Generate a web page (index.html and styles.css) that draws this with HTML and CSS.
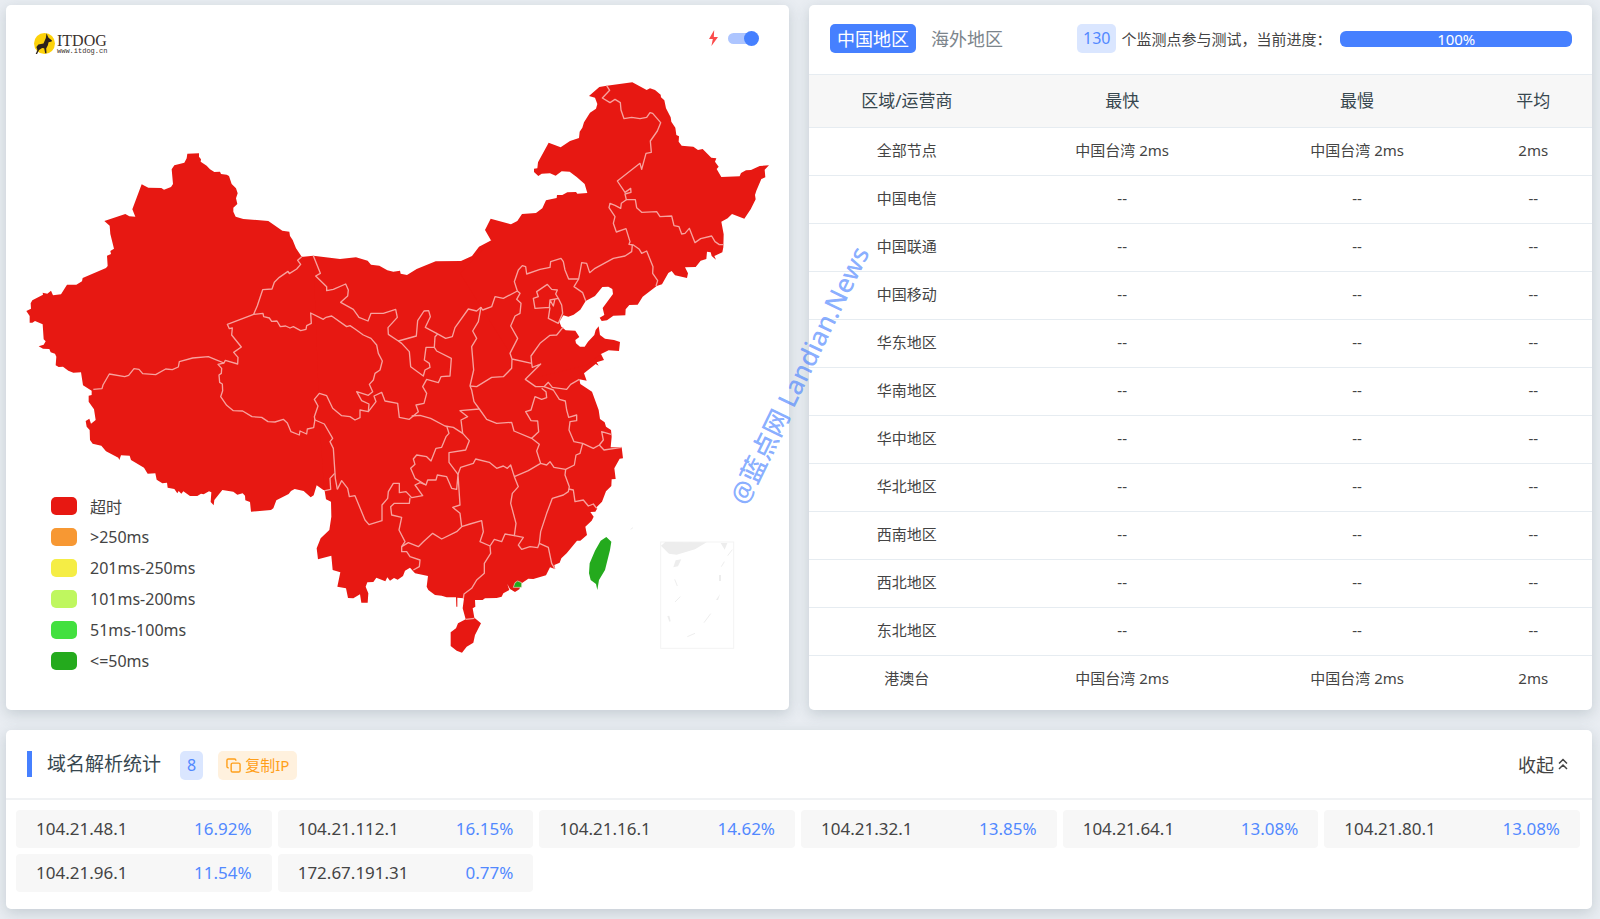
FILE: index.html
```html
<!DOCTYPE html>
<html lang="zh-CN">
<head>
    <meta charset="UTF-8">
    <meta name="viewport" content="width=device-width, initial-scale=1.0">
    <title>ITDOG</title>
    <link rel="stylesheet" href="styles.css">
</head>
<body>
    <div class="top-row">
        <section class="card map-card">
            <div class="map-header">
                <div class="logo">
                    <svg class="logo-icon" viewBox="0 0 62 62">
                        <circle cx="31" cy="31" r="31" fill="#fdd20a"/>
                        <path d="M37 1L35 15 28 31 13 34 7 41 10 50 5 62 9 62 15 50 24 44 30 45 33 60 37 60 36 46 41 36 43 27 52 25 53 22 43 14 41 10Z" fill="#2b211c"/>
                    </svg>
                    <div class="logo-text">
                        <span class="logo-name">ITDOG</span>
                        <span class="logo-url">www.itdog.cn</span>
                    </div>
                </div>
                <label class="speed-switch">
                    <svg class="bolt" viewBox="0 0 26 46"><path d="M15 0L0 26H11L7 46 26 20H14Z" fill="#fb4b4b"/></svg>
                    <input type="checkbox" class="switch" checked>
                </label>
            </div>

            <svg class="map" viewBox="18 225 2349 1890">
                <!-- west -->
                <g transform="translate(0 390)">
                    <path class="land" d="M905 380L888 355 878 330 870 318 868 305 847 302 805 273 730 267 707 260 700 245 700 233 712 222 708 205 713 190 708 175 695 162 687 138 680 134 663 132 660 125 643 126 630 118 620 107 602 95 603 88 597 80 597 70 562 71 560 85 553 98 523 106 515 118 519 162 513 171 492 179 484 174 445 173 425 163 397 238 406 260 388 259 376 252 313 273 329 287 331 312 342 356 331 363 333 372 321 377 323 408 318 414 248 444 246 454 229 464 201 464 183 493 159 496 153 482 142 491 128 488 129 494 97 511 92 520 93 536 79 543 89 558 89 578 97 578 105 573 128 583 131 628 137 634 131 644 116 649 129 656 148 657 152 667 165 671 169 680 167 706 176 711 189 710 205 722 220 728 243 727 249 766 275 782 275 795 266 797 266 815 282 838 287 870 273 881 268 866 257 873 260 890 269 900 270 930 278 941 304 947 318 964 355 983 358 990 363 976 389 977 393 990 432 1013 443 1031 466 1030 470 1049 487 1060 501 1058 503 1073 523 1077 532 1090 536 1083 544 1091 550 1084 570 1098 592 1098 603 1091 611 1093 627 1084 634 1087 632 1116 641 1126 643 1110 667 1080 700 1085 712 1094 728 1090 735 1097 736 1111 750 1116 753 1145 813 1140 820 1135 829 1111 866 1092 873 1083 884 1077 911 1083 932 1102 941 1096 950 1066 970 1080 1000 1080 1000 500 940 377 910 380Z"/>
                </g>
                <!-- centre and south -->
                <g transform="translate(900 690)">
                    <path class="land" d="M40 77L120 87 168 82 203 92 213 104 238 107 262 121 280 125 300 122 302 131 321 135 350 117 407 94 483 93 516 78 537 50 574 31 700 300 750 400 903 372 912 390 890 397 896 407 887 402 852 430 860 452 838 448 841 462 876 485 896 540 900 567 914 577 918 590 933 600 935 620 932 652 965 652 969 685 959 686 943 715 947 747 935 748 934 768 918 784 906 815 888 833 892 835 886 845 871 846 881 860 875 872 856 890 861 915 841 932 831 932 800 970 784 985 779 998 763 1005 765 1017 750 1012 738 1036 700 1047 685 1046 665 1060 658 1078 645 1086 630 1077 622 1062 628 1080 610 1090 605 1100 590 1104 555 1105 548 1110 525 1110 526 1130 518 1135 523 1163 543 1180 525 1215 520 1238 500 1250 486 1268 470 1262 452 1248 452 1207 468 1195 474 1180 497 1168 488 1135 492 1105 472 1103 472 1130 469 1130 468 1102 440 1102 425 1097 405 1095 385 1080 380 1070 384 1038 345 1030 330 1013 315 1022 309 1038 293 1049 282 1044 270 1052 262 1042 256 1054 229 1043 220 1056 202 1057 197 1070 205 1090 203 1118 184 1118 180 1093 160 1105 144 1104 138 1075 112 1070 121 1027 98 1020 94 977 54 988 50 955 62 925 88 900 94 860 93 815 78 808 72 770 60 600Z"/>
                </g>
                <!-- north east -->
                <g transform="translate(1380 180)">
                    <path class="land" d="M94 543L75 510 92 476 153 493 172 483 186 462 228 459 247 445 258 421 290 414 291 405 307 405 322 397 348 396 352 401 382 399 374 372 350 351 329 335 305 334 287 347 270 340 245 341 235 348 222 336 222 326 232 325 234 307 266 248 302 262 330 243 357 234 359 215 367 203 372 187 390 158 408 146 412 132 405 113 387 108 418 81 440 77 517 67 560 90 570 85 585 90 602 104 603 112 613 121 618 145 632 172 634 185 646 203 649 225 657 229 656 245 665 257 700 260 714 270 728 267 754 293 769 295 765 305 776 320 770 327 784 351 839 349 843 339 858 331 873 330 899 318 927 316 914 329 916 352 904 357 889 392 885 405 887 418 872 448 853 476 816 462 803 475 784 485 791 523 790 562 787 577 763 588 768 599 755 588 752 577 741 575 739 597 722 602 707 621 675 622 684 640 681 654 645 646 635 633 625 639 606 673 590 678 548 710 533 734 508 735 497 748 496 766 460 767 441 781 425 783 419 773 433 765 428 744 459 702 457 687 445 680 427 681 405 708 377 723 361 749 341 764 325 770 310 766 298 785 304 800 317 811 346 812 358 831 346 840 348 850 360 860 374 860 384 845 403 825 407 810 416 799 420 825 435 836 462 840 480 846 477 873 446 871 423 882 380 915 200 960 0 640Z"/>
                </g>

                <!-- province borders -->
                <g transform="translate(0 390)">
                    <path class="border" d="M905 380L893 391 902 403 890 417 868 431 864 424 838 442 823 457 816 477 788 479 772 527 761 553 789 550 791 560 808 564 815 574 831 573 841 590 857 588 870 594 880 590 902 602 918 598 920 587 934 580 932 549 970 568 978 562"/>
                    <path class="border" d="M761 553L682 583 688 596 697 594 695 615 724 651 701 667 714 682 713 702 676 691 672 699 645 688 625 680 578 684 538 695 535 711 517 719 497 717 467 734 428 731 417 718 402 716 386 736 374 740 328 732 309 765 306 776 280 778"/>
                    <path class="border" d="M672 699L654 703 665 715 664 730 657 735 659 757 667 762 668 782 662 800 680 826 700 842 728 843 756 860 785 862 804 875 825 876 850 868 862 879 873 905 898 915 900 903 920 912 922 897 941 893 945 868"/>
                </g>
                <g transform="translate(900 690)">
                    <path class="border" d="M78 262L95 258 140 290 150 287 165 297 190 315 213 325 230 345 235 370 247 393 240 420 225 430 220 450 208 463 218 485 205 496 170 485 185 512 207 522 205 545 180 540 180 563 165 570 150 560 125 557 98 535 80 497 58 490 43 508 54 528 43 560 45 570 73 582 98 625 90 635 100 655 106 745 112 778"/>
                    <path class="border" d="M40 77L61 130 47 138 80 170 80 182 100 178 137 162 145 180 143 198 122 217 160 238 177 262 204 273 213 250 250 250 287 238 292 262 264 293 265 313 295 333 349 318 353 272 372 243 386 242 391 260 376 292 410 310 437 325 457 320 465 293 505 237 530 243 543 232 548 240 575 230 585 200 610 205 652 183 643 155 655 120 667 107 677 110 680 132 720 118 750 112 752 95 783 85 790 95 795 120 806 147 836 147 845 98 860 100 869 128 885 115 940 85 975 78 995 65 997 45"/>
                    <path class="border" d="M295 333L305 340 328 365 332 410 370 438 375 420 390 412 388 400 373 390 378 352 403 352 405 320 413 312M403 352L410 363 454 385 450 438 423 440 415 458 380 448 368 470 380 490 372 520 348 525 355 545 328 568 298 562 293 520 255 513 245 487 222 498 228 515 205 545"/>
                    <path class="border" d="M335 558L360 556 392 565 435 588 460 592 488 610 483 570 503 560 480 542 538 537 522 515 515 480 510 468 521 420 515 350 530 325 518 303 535 275 543 232"/>
                    <path class="border" d="M510 468L530 470 575 442 610 440 635 415 636 387 630 370 653 325 632 288 645 258 660 250 663 220 650 208 660 190 652 183M636 387L695 400 693 378 720 340 750 316 770 315 789 292M695 400L697 412 722 402 676 448 707 470 732 470 745 457 757 472 800 478 812 463 838 448"/>
                    <path class="border" d="M538 537L560 568 590 580 635 577 642 603 695 625 716 605 713 573 693 572 677 545 693 540 705 500 725 508 740 503 738 485 725 475M732 470L760 480 778 508 796 513 800 540 806 562 830 555 830 572 810 575 807 600 822 635 848 640 880 655 898 645 910 630 905 605 933 613M898 645L912 660 965 652"/>
                    <path class="border" d="M695 625L718 643 710 663 722 700 740 705 750 695 762 712 797 718 823 705 828 675 840 670 848 640M488 610L508 632 497 660 447 668 447 697 474 733 482 712 520 700 527 687 568 697 590 715 610 708 622 715 632 705 643 740 685 722 722 700"/>
                    <path class="border" d="M440 588L447 610 438 620 425 652 408 655 393 693 380 680 350 675 340 687 345 703 332 715 345 745 378 765 383 750 408 750 412 735 440 740 455 775 470 778 474 733 480 825 458 832 480 850 485 890"/>
                    <path class="border" d="M378 765L360 758 345 765 368 797 335 803 318 785 298 788 298 760 280 760 265 785 263 805 246 825 246 872 207 884 195 870 165 797 148 800 143 775 125 752 112 778M330 803L328 820 283 820 272 830 275 855 305 862 297 900 315 935 305 950 305 965 320 965 330 980 360 990 358 1010 340 1020M104 730L90 745 92 778 75 782"/>
                    <path class="border" d="M305 950L325 938 355 950 370 935 398 910 425 927 470 905 485 890 510 882 545 872 550 905 540 935 570 948 572 970 553 1000 553 1030 530 1050 515 1075 492 1092 490 1105M570 948L583 928 605 935 615 912 643 917 648 880 632 820 637 790 655 770 643 740"/>
                    <path class="border" d="M643 917L670 922 655 945 665 958 690 950 713 953 718 940 722 905 740 850 757 805 790 795 805 785 808 770 795 735 797 718M806 777L820 780 825 815 850 810 865 828 880 822 890 835M718 940L745 952 755 1000 765 1017M497 1168L523 1165"/>
                    <path class="border" d="M700 205L715 200 710 185 742 163 755 178 772 180 767 192 775 205 750 210 748 232 705 235ZM775 205L785 225 788 250 775 280 745 265 750 232M750 210L760 228 765 206M836 147L822 170 848 188 857 212"/>
                    <path class="hit" d="M919 921L934 935 930 960 915 1020 897 1050 892 1080 888 1062 872 1050 867 1030 869 1000 885 962 902 932Z"/>
                    <path class="hit hit-line" d="M640 1072L645 1058 653 1053 665 1058 665 1072Z"/>
                </g>
                <g transform="translate(1380 180)">
                    <path class="border" d="M440 77L449 91 427 114 450 128 465 118 481 128 483 150 492 176 515 172 540 176 560 172 570 158 578 160 602 188 592 213 571 243 574 277 558 280 545 328 540 310 472 363 495 397 512 385 513 397 495 402 499 419 526 419 530 443 545 457 590 455 600 470 635 468 642 497 657 500 665 522 675 520 688 505 705 548 722 536 755 528 765 545 778 554 792 554"/>
                    <path class="border" d="M499 419L484 430 482 445 465 436 450 430 447 443 465 470 460 490 469 516 498 506 510 545 507 553 520 555 538 568 545 580 560 573 579 620 578 640 593 662 588 678"/>
                </g>

                <!-- south sea inset -->
                <g class="inset" transform="translate(1680 1500)">
                    <rect x="302" y="126" width="219" height="319" fill="none" stroke="#f4f4f4" stroke-width="3"/>
                    <path d="M316 126L440 127 405 148 350 164 327 161 303 137ZM482 129H502L494 149ZM347 181L364 178 354 199 340 202Z" fill="#ededed"/>
                    <path d="M477 225H483V243H477ZM480 282L474 300H468ZM322 348L328 347 332 364 328 365Z" fill="#ededed"/>
                    <path d="M517 149L503 167M493 185L484 200M344 238L352 258M361 290L345 306M452 341L432 368M405 400L382 410M212 88L219 83" stroke="#eee" stroke-width="3"/>
                </g>
            </svg>

            <ul class="legend">
                <li><span class="swatch timeout"></span>超时</li>
                <li><span class="swatch over-250"></span>&gt;250ms</li>
                <li><span class="swatch to-250"></span>201ms-250ms</li>
                <li><span class="swatch to-200"></span>101ms-200ms</li>
                <li><span class="swatch to-100"></span>51ms-100ms</li>
                <li><span class="swatch to-50"></span>&lt;=50ms</li>
            </ul>
        </section>

        <section class="card">
            <div class="result-header">
                <button class="tab active">中国地区</button>
                <button class="tab">海外地区</button>
                <div class="progress-info">
                    <span class="badge">130</span>
                    <span class="progress-label">个监测点参与测试，当前进度：</span>
                    <div class="progress"><div class="progress-bar" style="width: 100%">100%</div></div>
                </div>
            </div>
            <table class="result-table">
                <thead>
                    <tr><th>区域/运营商</th><th>最快</th><th>最慢</th><th>平均</th></tr>
                </thead>
                <tbody>
                    <tr><td>全部节点</td><td>中国台湾 2ms</td><td>中国台湾 2ms</td><td>2ms</td></tr>
                    <tr><td>中国电信</td><td>--</td><td>--</td><td>--</td></tr>
                    <tr><td>中国联通</td><td>--</td><td>--</td><td>--</td></tr>
                    <tr><td>中国移动</td><td>--</td><td>--</td><td>--</td></tr>
                    <tr><td>华东地区</td><td>--</td><td>--</td><td>--</td></tr>
                    <tr><td>华南地区</td><td>--</td><td>--</td><td>--</td></tr>
                    <tr><td>华中地区</td><td>--</td><td>--</td><td>--</td></tr>
                    <tr><td>华北地区</td><td>--</td><td>--</td><td>--</td></tr>
                    <tr><td>西南地区</td><td>--</td><td>--</td><td>--</td></tr>
                    <tr><td>西北地区</td><td>--</td><td>--</td><td>--</td></tr>
                    <tr><td>东北地区</td><td>--</td><td>--</td><td>--</td></tr>
                    <tr><td>港澳台</td><td>中国台湾 2ms</td><td>中国台湾 2ms</td><td>2ms</td></tr>
                </tbody>
            </table>
        </section>

        <div class="watermark">@蓝点网 Landian.News</div>
    </div>

    <section class="card">
        <div class="dns-header">
            <h2>域名解析统计</h2>
            <span class="badge">8</span>
            <button class="copy-btn">
                <svg viewBox="0 0 16 16" fill="none" stroke="currentColor" stroke-width="1.5">
                    <rect x="5.5" y="5.5" width="9.5" height="9.5" rx="1.5"/>
                    <path d="M3 10.5H2.5A1.5 1.5 0 0 1 1 9V2.5A1.5 1.5 0 0 1 2.5 1H9A1.5 1.5 0 0 1 10.5 2.5V3"/>
                </svg>
                复制IP
            </button>
            <button class="collapse-btn">
                收起
                <svg viewBox="0 0 10 12" fill="none" stroke="currentColor" stroke-width="1.5"><path d="M1 5.5L5 1.5 9 5.5M1 11L5 7 9 11"/></svg>
            </button>
        </div>
        <div class="ip-list">
            <div class="ip-item"><span>104.21.48.1</span><span class="percent">16.92%</span></div>
            <div class="ip-item"><span>104.21.112.1</span><span class="percent">16.15%</span></div>
            <div class="ip-item"><span>104.21.16.1</span><span class="percent">14.62%</span></div>
            <div class="ip-item"><span>104.21.32.1</span><span class="percent">13.85%</span></div>
            <div class="ip-item"><span>104.21.64.1</span><span class="percent">13.08%</span></div>
            <div class="ip-item"><span>104.21.80.1</span><span class="percent">13.08%</span></div>
            <div class="ip-item"><span>104.21.96.1</span><span class="percent">11.54%</span></div>
            <div class="ip-item"><span>172.67.191.31</span><span class="percent">0.77%</span></div>
        </div>
    </section>
</body>
</html>
```
FILE: styles.css
```css
* {
    box-sizing: border-box;
}
body {
    margin: 0;
    padding: 5px 8px 10px 6px;
    background-color: #e9edf2;
    color: #444;
    font-family: "Noto Sans", "Noto Sans CJK SC", sans-serif;
    font-size: 15px;
}
button {
    border: 0;
    padding: 0;
    background: none;
    color: inherit;
    font-family: inherit;
    cursor: pointer;
}
.card {
    background: white;
    border-radius: 5px;
    box-shadow: 0 4px 14px rgba(69, 90, 100, 0.22);
}
.top-row {
    position: relative;
    display: grid;
    grid-template-columns: 1fr 1fr;
    gap: 20px;
    margin-bottom: 20px;
}

/* map */
.map-card {
    position: relative;
    padding-bottom: 5px;
}
.map-header {
    display: flex;
    justify-content: space-between;
    align-items: center;
    height: 70px;
    padding: 0 31px 0 28px;
}
.logo {
    display: flex;
    align-items: center;
    gap: 2px;
    margin-top: 7px;
}
.logo-icon {
    width: 21px;
    height: 21px;
}
.logo-text {
    display: flex;
    flex-direction: column;
    color: #3a302c;
}
.logo-name {
    font-family: "Liberation Serif", serif;
    font-size: 16px;
    line-height: 14px;
}
.logo-url {
    font-family: "Liberation Mono", monospace;
    font-size: 7px;
    line-height: 6px;
}
.speed-switch {
    display: flex;
    align-items: center;
    gap: 10px;
    margin-bottom: 4px;
}
.bolt {
    width: 9px;
    height: 16px;
}
.switch {
    appearance: none;
    position: relative;
    width: 30px;
    height: 11px;
    margin: 0;
    border-radius: 6px;
    background: #adc5ff;
}
.switch::after {
    content: "";
    position: absolute;
    top: -2px;
    right: -1px;
    width: 15px;
    height: 15px;
    border-radius: 50%;
    background: #4680ff;
}
.map {
    display: block;
    width: 100%;
}
.land {
    fill: #e71812;
}
.border {
    fill: none;
    stroke: #f7a29e;
    stroke-width: 4;
    stroke-linejoin: round;
}
.hit {
    fill: #24aa1d;
}
.hit-line {
    stroke: #f3e3d0;
    stroke-width: 2;
}
.legend {
    position: absolute;
    left: 45px;
    bottom: 34px;
    margin: 0;
    padding: 0;
    list-style: none;
    font-size: 16px;
}
.legend li {
    display: flex;
    align-items: center;
    gap: 13px;
    height: 31px;
}
.swatch {
    width: 26px;
    height: 18px;
    border-radius: 5px;
}
.timeout { background: #e71812; }
.over-250 { background: #f79833; }
.to-250 { background: #f5ed45; }
.to-200 { background: #bff75f; }
.to-100 { background: #42e03f; }
.to-50 { background: #24aa1d; }

/* results */
.result-header {
    display: flex;
    align-items: center;
    height: 70px;
    padding: 0 20px 2px 21px;
    border-bottom: 1px solid #e6ecf1;
}
.tab {
    height: 29px;
    padding: 0 7px;
    border-radius: 5px;
    color: #7c858c;
    font-size: 18px;
    line-height: 28px;
}
.tab + .tab {
    margin-left: 8px;
}
.tab.active {
    background: #4680ff;
    color: white;
}
.progress-info {
    display: flex;
    flex: 1;
    align-items: center;
    margin-left: 67px;
}
.badge {
    padding: 0 6px;
    border-radius: 5px;
    background: #dae6ff;
    color: #5289ff;
    font-size: 16px;
    line-height: 29px;
}
.progress-label {
    margin-left: 5px;
    white-space: nowrap;
}
.progress {
    flex: 1;
    margin-left: 9px;
}
.progress-bar {
    height: 16px;
    border-radius: 6px;
    background: #4680ff;
    color: white;
    line-height: 16px;
    text-align: center;
}
.result-table {
    width: 100%;
    border-collapse: collapse;
    table-layout: fixed;
    text-align: center;
}
.result-table th {
    width: 30%;
    height: 52px;
    padding: 0 0 2px;
    background: #f7f7f7;
    color: #37474f;
    font-size: 17px;
    font-weight: normal;
}
.result-table th:first-child {
    width: 25%;
}
.result-table th:last-child {
    width: 15%;
}
.result-table td {
    height: 48px;
    padding: 0 0 3px;
}
.result-table tr {
    border-bottom: 1px solid #e6ecf1;
}
.result-table tbody tr:last-child {
    border-bottom: 0;
}
.watermark {
    position: absolute;
    top: 370px;
    left: 50%;
    color: rgba(70, 128, 255, 0.65);
    font-size: 26px;
    font-weight: 500;
    line-height: 32px;
    white-space: nowrap;
    transform: translate(-50%, -50%) rotate(-64deg);
    pointer-events: none;
}

/* dns statistics */
.dns-header {
    display: flex;
    align-items: center;
    height: 70px;
    padding: 0 24px 0 21px;
    border-bottom: 2px solid #f0f2f4;
}
.dns-header h2 {
    margin: 0 19px 0 0;
    padding-left: 15px;
    border-left: 5px solid #4680ff;
    color: #37474f;
    font-size: 19px;
    font-weight: normal;
    line-height: 26px;
}
.dns-header .badge {
    padding: 0 7px;
}
.dns-header .badge,
.copy-btn {
    margin-top: 3px;
}
.copy-btn {
    display: flex;
    align-items: center;
    gap: 4px;
    margin-left: 15px;
    padding: 0 8px;
    border-radius: 5px;
    background: #fff1de;
    color: #ff9f1a;
    font-size: 15px;
    line-height: 29px;
}
.copy-btn svg {
    width: 15px;
    height: 15px;
}
.collapse-btn {
    display: flex;
    align-items: center;
    gap: 4px;
    margin-left: auto;
    font-size: 18px;
}
.collapse-btn svg {
    width: 10px;
    height: 12px;
}
.ip-list {
    display: grid;
    grid-template-columns: repeat(6, 1fr);
    gap: 6px;
    padding: 10px 12px 17px 10px;
}
.ip-item {
    display: flex;
    justify-content: space-between;
    padding: 0 20px;
    border-radius: 4px;
    background: #f7f7f7;
    font-size: 17px;
    line-height: 38px;
}
.percent {
    color: #5289ff;
}
```
